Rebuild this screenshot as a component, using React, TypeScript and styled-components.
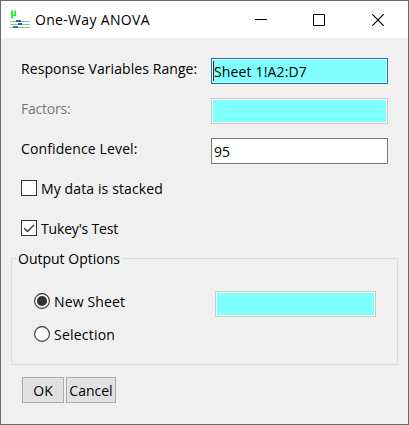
import React from "react";
import styled, { createGlobalStyle } from "styled-components";

const GlobalStyle = createGlobalStyle`
  * { box-sizing: border-box; }
  body { margin: 0; background: #f0f0f0; }
`;

const Dialog = styled.div`
  width: 409px;
  height: 425px;
  border: 1px solid #6c6c6c;
  background: #f0f0f0;
  color: #000;
  font: 14px/20px "Open Sans", "Noto Sans", sans-serif;
  white-space: nowrap;
  overflow: hidden;
`;

const TitleBar = styled.header`
  display: flex;
  align-items: center;
  height: 37px;
  padding-left: 9px;
  background: #fff;
`;

const Title = styled.div`
  flex: 1;
  padding-left: 5px;
`;

const WindowButton = styled.div<{ $width: number }>`
  display: flex;
  justify-content: center;
  width: ${(p) => p.$width}px;
`;

const Text = styled.span<{ $spacing?: number; $muted?: boolean }>`
  letter-spacing: ${(p) => p.$spacing ?? 0}px;
  color: ${(p) => (p.$muted ? "#787878" : "inherit")};
`;

const Body = styled.main`
  padding-top: 20px;
`;

const FieldRow = styled.label`
  display: flex;
  align-items: center;
  justify-content: space-between;
  height: 26px;
  margin: 0 20px 14px;
  & > ${Text} { padding-bottom: 4px; }
`;

const Field = styled.div<{ $width: number; $border: string; $range?: boolean }>`
  display: flex;
  align-items: center;
  width: ${(p) => p.$width}px;
  height: 26px;
  padding: 1px;
  border: 1px solid ${(p) => p.$border};
  background: ${(p) => (p.$range ? "#80ffff" : "#fff")};
  box-shadow: inset 0 0 0 1px #fff;
`;

const Caret = styled.i`
  width: 1px;
  height: 20px;
  margin-right: -1px;
  background: #80000f;
`;

const FieldText = styled(Text)`
  padding: 2px 0 0 1px;
`;

const CheckRow = styled.label`
  display: flex;
  align-items: center;
  gap: 4px;
  height: 20px;
  margin: 0 20px 20px;
  & > ${Text} { padding-top: 2px; }
`;

const CheckBox = styled.span`
  width: 16px;
  height: 16px;
  border: 1px solid #333;
  background: #fff;
  & svg { display: block; }
`;

const Group = styled.fieldset`
  width: 387px;
  height: 117px;
  margin: -10px 0 12px 10px;
  padding: 22px 21px 0 22px;
  border: 1px solid #dcdcdc;
`;

const Legend = styled.legend`
  height: 21px;
  margin-left: -18px;
  padding: 1px 2px 0;
`;

const OptionRow = styled.div`
  display: flex;
  align-items: center;
  justify-content: space-between;
  height: 26px;
  margin-bottom: 7px;
`;

const Choice = styled.label`
  display: flex;
  align-items: center;
  gap: 4px;
  height: 20px;
  margin-bottom: 6px;
  & > ${Text} { padding-top: 2px; }
`;

const Buttons = styled.footer`
  display: flex;
  gap: 2px;
  margin-left: 21px;
`;

const Button = styled.button<{ $width: number }>`
  width: ${(p) => p.$width}px;
  height: 26px;
  padding: 2px 0 0;
  border: 1px solid #adadad;
  background: #e1e1e1;
  color: inherit;
  font: inherit;
`;

const Radio = ({ on = false }: { on?: boolean }) => (
  <svg width="16" height="16">
    <circle cx="8" cy="8" r="7.4" fill="#fff" stroke="#333" strokeWidth="1.1" />
    {on && <circle cx="8" cy="8" r="5.1" fill="#333" />}
  </svg>
);

const AppIcon = () => (
  <svg width="20" height="19" viewBox="0 0 20 19">
    <path d="M2 8.5V.5M2 5.3H5.5M5.3.5V6.2" fill="none" stroke="#22ee2a" strokeWidth="1.8" />
    <g shapeRendering="crispEdges">
      <path d="M0 11.5H20M0 14.5H20M0 17.5H20" stroke="#7dcc9a" />
      <path d="M6 10h5v2H6zM8 13h4v2H8z" fill="#3e55c4" />
      <path d="M3 16h5v2H3z" fill="#287e80" />
    </g>
  </svg>
);

export default function App() {
  return (
    <>
      <GlobalStyle />
      <Dialog>
        <TitleBar>
          <AppIcon />
          <Title><Text $spacing={0.32}>One-Way ANOVA</Text></Title>
          <WindowButton $width={58}>
            <svg width="12" height="12"><path d="M0 5.5H12" stroke="#000" /></svg>
          </WindowButton>
          <WindowButton $width={58}>
            <svg width="12" height="12"><path d="M.5.5h11v11H.5z" fill="none" stroke="#000" /></svg>
          </WindowButton>
          <WindowButton $width={60}>
            <svg width="12" height="12"><path d="M.3.3l11.4 11.4M11.7.3L.3 11.7" stroke="#000" strokeWidth="1.1" /></svg>
          </WindowButton>
        </TitleBar>
        <Body>
          <FieldRow>
            <Text $spacing={0.07}>Response Variables Range:</Text>
            <Field $width={177} $border="#0078d7" $range><Caret /><FieldText $spacing={0.15}>Sheet 1!A2:D7</FieldText></Field>
          </FieldRow>
          <FieldRow>
            <Text $spacing={-0.22} $muted>Factors:</Text>
            <Field $width={177} $border="#cccccc" $range />
          </FieldRow>
          <FieldRow>
            <Text $spacing={0.12}>Confidence Level:</Text>
            <Field $width={177} $border="#7a7a7a"><FieldText>95</FieldText></Field>
          </FieldRow>
          <CheckRow>
            <CheckBox />
            <Text $spacing={0.12}>My data is stacked</Text>
          </CheckRow>
          <CheckRow>
            <CheckBox>
              <svg width="14" height="14"><path d="M2.3 7.2L5.5 10.4L12 3.9" fill="none" stroke="#333" strokeWidth="1.4" /></svg>
            </CheckBox>
            <Text $spacing={-0.17}>Tukey's Test</Text>
          </CheckRow>
          <Group>
            <Legend><Text>Output Options</Text></Legend>
            <OptionRow>
              <Choice>
                <Radio on />
                <Text $spacing={0.15}>New Sheet</Text>
              </Choice>
              <Field $width={161} $border="#cccccc" $range />
            </OptionRow>
            <OptionRow>
              <Choice>
                <Radio />
                <Text $spacing={0.22}>Selection</Text>
              </Choice>
            </OptionRow>
          </Group>
          <Buttons>
            <Button $width={42}><Text>OK</Text></Button>
            <Button $width={50}><Text>Cancel</Text></Button>
          </Buttons>
        </Body>
      </Dialog>
    </>
  );
}
